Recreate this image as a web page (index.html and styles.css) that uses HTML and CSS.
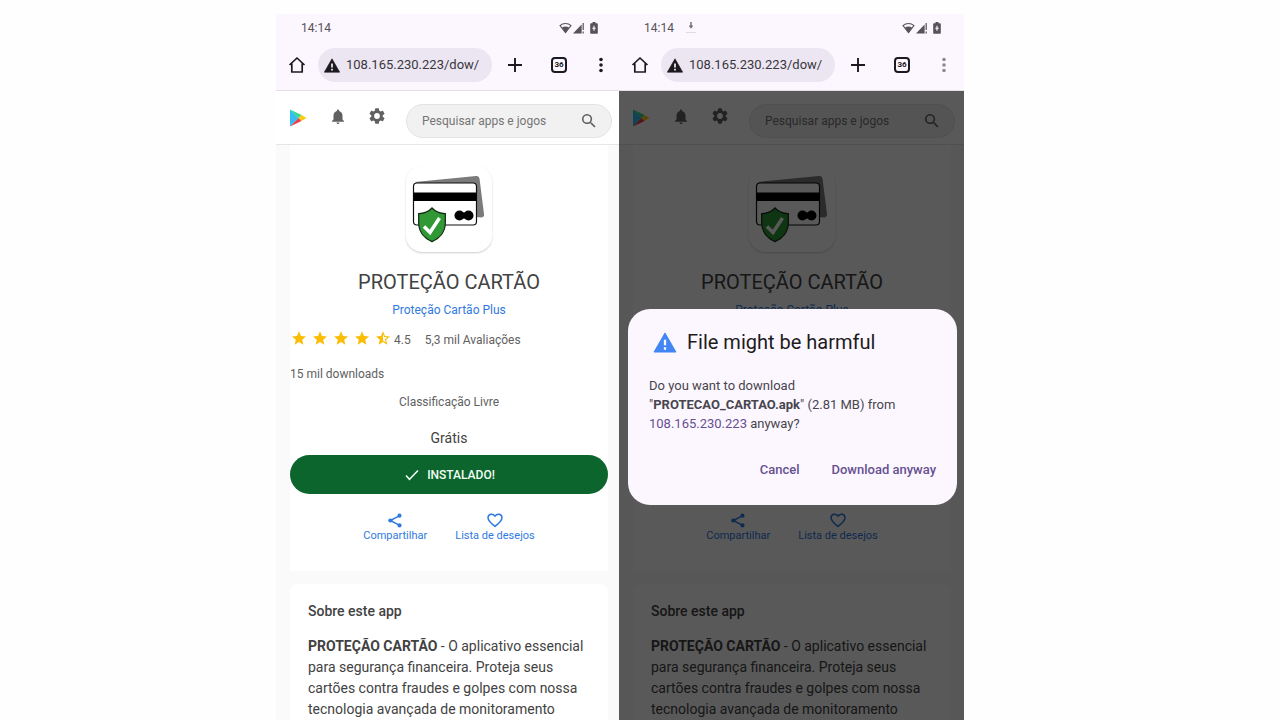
FILE: index.html
```html
<!DOCTYPE html>
<html lang="pt-BR">
<head>
<meta charset="utf-8">
<meta name="viewport" content="width=device-width, initial-scale=1">
<title>Proteção Cartão</title>
<link rel="stylesheet" href="styles.css">
</head>
<body>
<svg class="sprite" aria-hidden="true">
  <symbol id="wifi" viewBox="0 0 13 12"><path d="M1 3.6C4 .8 9 .8 12 3.6L6.5 10.5z" fill="none" stroke="currentColor" stroke-width="1.1"/><path d="M3 5.600c2-1.600 5-1.600 7 0L6.500 11z" fill="currentColor"/></symbol>
  <symbol id="signal" viewBox="0 0 12 12"><path d="M0 11.500L8.600 2.600V11.500z" fill="currentColor"/><path d="M10.200 1v7M10.200 9.500v2" stroke="currentColor" stroke-width="1.200" fill="none"/></symbol>
  <symbol id="battery" viewBox="0 0 8 12"><path d="M2.500 0h3v1.200H7q.8 0 .8.800v9q0 .8-.8.800H1q-.8 0-.8-.800V2q0-.8.8-.8h1.500z" fill="currentColor"/><path d="M4 3.800v5M2.300 6.300h3.400" stroke="#fff" stroke-width="1.100"/></symbol>
  <symbol id="home" viewBox="0 0 18 18"><path d="M1.500 9L9 2l7.500 7M3.800 7.500V16h10.400V7.500" fill="none" stroke="currentColor" stroke-width="1.700" stroke-linejoin="round"/></symbol>
  <symbol id="warn" viewBox="0 0 24 22"><path d="M12 1L23.500 21H.5z" fill="currentColor" stroke="currentColor" stroke-linejoin="round"/><path d="M12 8v6M12 16v2.500" stroke="#fff" stroke-width="2.400"/></symbol>
  <symbol id="plus" viewBox="0 0 16 16"><path d="M8 1v14M1 8h14" stroke="currentColor" stroke-width="1.900"/></symbol>
  <symbol id="dots" viewBox="0 0 6 16"><g fill="currentColor"><circle cx="3" cy="2.500" r="1.800"/><circle cx="3" cy="8" r="1.800"/><circle cx="3" cy="13.500" r="1.800"/></g></symbol>
  <symbol id="save" viewBox="0 0 10 14"><path d="M5 1v5M3.500 4.500L5 6.500l1.500-2" fill="none" stroke="#777" stroke-width="1.500"/><path d="M0 11.500h10" stroke="#ddd"/></symbol>
  <symbol id="play" viewBox="0 0 18 18"><path d="M1 .5v17L9.500 9z" fill="#35bdf2"/><path d="M1 .5L9.500 9l3-3z" fill="#36d98a"/><path d="M1 17.500L9.500 9l3 3z" fill="#ec3b50"/><path d="M12.500 6L17.500 9l-5 3-3-3z" fill="#fdc912"/></symbol>
  <symbol id="bell" viewBox="4 2 16 20"><path d="M12 22c1.100 0 2-.9 2-2h-4c0 1.100.9 2 2 2zm6-6v-5c0-3.070-1.640-5.640-4.500-6.320V4a1.500 1.500 0 0 0-3 0v.68C7.630 5.360 6 7.920 6 11v5l-2 2v1h16v-1z" fill="currentColor"/></symbol>
  <symbol id="gear" viewBox="2 2 20 20"><path fill="currentColor" d="M19.140 12.940a7 7 0 0 0 0-1.880l2.030-1.580a.5.5 0 0 0 .12-.61l-1.920-3.320a.5.5 0 0 0-.59-.22l-2.390.96a7 7 0 0 0-1.620-.94l-.36-2.540a.5.5 0 0 0-.48-.41h-3.840a.5.5 0 0 0-.47.410l-.36 2.540a7 7 0 0 0-1.620.94l-2.390-.96a.5.5 0 0 0-.59.220L2.740 8.870a.5.5 0 0 0 .12.610l2.030 1.580a7 7 0 0 0 0 1.880l-2.030 1.580a.5.5 0 0 0-.12.610l1.920 3.320c.12.220.37.290.59.220l2.390-.96c.5.380 1.030.7 1.620.94l.36 2.540c.05.240.24.410.48.410h3.840c.24 0 .44-.17.470-.41l.36-2.540a7 7 0 0 0 1.620-.94l2.390.96c.22.080.47 0 .59-.22l1.920-3.320a.5.5 0 0 0-.12-.61zM12 15.600a3.600 3.600 0 1 1 0-7.200 3.600 3.600 0 0 1 0 7.200z"/></symbol>
  <symbol id="search" viewBox="3 3 18 18"><path fill="currentColor" d="M15.500 14h-.79l-.28-.27A6.500 6.500 0 1 0 13.730 14.430l.27.280v.79l5 4.990L20.490 19zm-6 0a4.500 4.500 0 1 1 0-9 4.500 4.500 0 0 1 0 9z"/></symbol>
  <symbol id="cards" viewBox="0 0 86 86">
    <path d="M9 16L70 10q3-.5 3.500 2.500L78 48q.5 3-2.500 3.500L69 51z" fill="#7b7b7b"/>
    <rect x="7.500" y="17" width="63" height="42" rx="3.500" fill="#fff" stroke="#111" stroke-width="1.200"/>
    <path d="M7.500 26.500h63v8.500h-63z" fill="#000"/><circle cx="53.500" cy="49.500" r="5" fill="#000"/><circle cx="62.500" cy="49.500" r="5" fill="#000"/><path d="M53.500 46.500h9v6h-9z" fill="#000"/>
    <path d="M26 42c4 4.300 8 5.600 13.300 5.600v9.400c0 9-6 15.500-13.300 18.700-7.300-3.200-13.300-9.700-13.300-18.700v-9.400c5.300 0 9.300-1.300 13.300-5.600z" fill="#309834" stroke="#142e15" stroke-width="1.300"/>
    <path d="M18 60.500l6 6L33.500 52" fill="none" stroke="#fff" stroke-width="3.500"/>
  </symbol>
  <symbol id="star" viewBox="2 2 20 19"><path fill="currentColor" d="M12 17.270L18.180 21l-1.640-7.030L22 9.240l-7.190-.61L12 2 9.190 8.630 2 9.240l5.460 4.730L5.820 21z"/></symbol>
  <symbol id="half" viewBox="2 2 20 19"><path fill="currentColor" d="M22 9.240l-7.190-.62L12 2 9.190 8.630 2 9.240l5.460 4.730L5.820 21 12 17.270 18.180 21l-1.630-7.030zM12 15.400V6.100l1.710 4.040 4.380.38-3.320 2.880 1 4.280z"/></symbol>
  <symbol id="check" viewBox="0 0 14 12"><path d="M1 6.500l3.500 3.800L13 1.500" fill="none" stroke="currentColor" stroke-width="1.500"/></symbol>
  <symbol id="share" viewBox="0 0 16 16"><path d="M12.500 3L3 8l9.500 5" fill="none" stroke="currentColor" stroke-width="1.600"/><g fill="currentColor"><circle cx="12.800" cy="2.800" r="2.200"/><circle cx="3" cy="8" r="2.200"/><circle cx="12.800" cy="13.200" r="2.200"/></g></symbol>
  <symbol id="heart" viewBox="0 0 16 15"><path d="M8 13.500C4.500 10.500 1 8 1 4.800 1 .7 6 0 8 3.200 10 0 15 .7 15 4.800 15 8 11.500 10.500 8 13.500z" fill="none" stroke="currentColor" stroke-width="1.500"/></symbol>
</svg>
<main class="stage">
  <section class="phone">
    <header class="chrome">
      <div class="status"><time>14:14</time><span class="status-icons"><svg class="wifi"><use href="#wifi"/></svg><svg class="signal"><use href="#signal"/></svg><svg class="battery"><use href="#battery"/></svg></span></div>
      <div class="toolbar">
        <button class="icon-btn" aria-label="Home"><svg class="i18"><use href="#home"/></svg></button>
        <label class="address"><svg class="warn"><use href="#warn"/></svg><input type="text" aria-label="Address" value="108.165.230.223/dow/"></label>
        <button class="icon-btn plus" aria-label="New tab"><svg class="i16"><use href="#plus"/></svg></button>
        <button class="tabs" aria-label="36 tabs">36</button>
        <button class="icon-btn menu" aria-label="Menu"><svg class="dots"><use href="#dots"/></svg></button>
      </div>
    </header>
    <div class="page">
      <nav class="store-bar">
        <a class="play" href="#" aria-label="Play"><svg class="i18"><use href="#play"/></svg></a>
        <button class="icon-btn bell" aria-label="Notificações"><svg class="bell-icon"><use href="#bell"/></svg></button>
        <button class="icon-btn gear" aria-label="Configurações"><svg class="i16"><use href="#gear"/></svg></button>
        <label class="search"><input type="text" aria-label="Pesquisar" placeholder="Pesquisar apps e jogos"><svg class="search-icon"><use href="#search"/></svg></label>
      </nav>
      <article class="hero">
        <svg class="app-icon"><use href="#cards"/></svg>
        <h1>PROTEÇÃO CARTÃO</h1>
        <a class="maker" href="#">Proteção Cartão Plus</a>
        <div class="rating"><span class="stars"><svg><use href="#star"/></svg><svg><use href="#star"/></svg><svg><use href="#star"/></svg><svg><use href="#star"/></svg><svg><use href="#half"/></svg></span><span>4.5</span><span class="reviews">5,3 mil Avaliações</span></div>
        <p class="downloads">15 mil downloads</p>
        <p class="class">Classificação Livre</p>
        <p class="price">Grátis</p>
        <button class="install"><svg><use href="#check"/></svg>INSTALADO!</button>
        <div class="links"><a href="#"><svg><use href="#share"/></svg>Compartilhar</a><a href="#"><svg><use href="#heart"/></svg>Lista de desejos</a></div>
      </article>
      <article class="about">
        <h2>Sobre este app</h2>
        <p><strong>PROTEÇÃO CARTÃO</strong> - O aplicativo essencial para segurança financeira. Proteja seus cartões contra fraudes e golpes com nossa tecnologia avançada de monitoramento</p>
      </article>
    </div>
  </section>
  <section class="phone second">
    <header class="chrome">
      <div class="status"><time>14:14</time><svg class="save"><use href="#save"/></svg><span class="status-icons"><svg class="wifi"><use href="#wifi"/></svg><svg class="signal"><use href="#signal"/></svg><svg class="battery"><use href="#battery"/></svg></span></div>
      <div class="toolbar">
        <button class="icon-btn" aria-label="Home"><svg class="i18"><use href="#home"/></svg></button>
        <label class="address"><svg class="warn"><use href="#warn"/></svg><input type="text" aria-label="Address" value="108.165.230.223/dow/"></label>
        <button class="icon-btn plus" aria-label="New tab"><svg class="i16"><use href="#plus"/></svg></button>
        <button class="tabs" aria-label="36 tabs">36</button>
        <button class="icon-btn menu" aria-label="Menu"><svg class="dots"><use href="#dots"/></svg></button>
      </div>
    </header>
    <div class="page">
      <nav class="store-bar">
        <a class="play" href="#" aria-label="Play"><svg class="i18"><use href="#play"/></svg></a>
        <button class="icon-btn bell" aria-label="Notificações"><svg class="bell-icon"><use href="#bell"/></svg></button>
        <button class="icon-btn gear" aria-label="Configurações"><svg class="i16"><use href="#gear"/></svg></button>
        <label class="search"><input type="text" aria-label="Pesquisar" placeholder="Pesquisar apps e jogos"><svg class="search-icon"><use href="#search"/></svg></label>
      </nav>
      <article class="hero">
        <svg class="app-icon"><use href="#cards"/></svg>
        <h1>PROTEÇÃO CARTÃO</h1>
        <a class="maker" href="#">Proteção Cartão Plus</a>
        <div class="covered"></div>
        <div class="links"><a href="#"><svg><use href="#share"/></svg>Compartilhar</a><a href="#"><svg><use href="#heart"/></svg>Lista de desejos</a></div>
      </article>
      <article class="about">
        <h2>Sobre este app</h2>
        <p><strong>PROTEÇÃO CARTÃO</strong> - O aplicativo essencial para segurança financeira. Proteja seus cartões contra fraudes e golpes com nossa tecnologia avançada de monitoramento</p>
      </article>
      <div class="scrim">
        <div class="dialog" role="dialog" aria-labelledby="harm">
          <div class="dialog-head"><svg><use href="#warn"/></svg><h2 id="harm">File might be harmful</h2></div>
          <p>Do you want to download<br>"<strong>PROTECAO_CARTAO.apk</strong>" (2.81 MB) from<br><a href="#">108.165.230.223</a> anyway?</p>
          <div class="actions"><button>Cancel</button><button>Download anyway</button></div>
        </div>
      </div>
    </div>
  </section>
</main>
</body>
</html>
```
FILE: styles.css
```css
* { box-sizing: border-box; }
body { margin: 0; background: #fefefe; font: 12px/20px Roboto, "Noto Sans", sans-serif; color: #424242; }
h1, h2, p { margin: 0; font-weight: 400; }
a { color: #3079e0; text-decoration: none; }
svg { display: block; flex: none; }
button { border: 0; padding: 0; background: none; color: inherit; font: inherit; }
input { border: 0; padding: 0; background: none; outline: 0; font: inherit; color: inherit; min-width: 0; flex: 1; }
.sprite { position: absolute; width: 0; height: 0; }
.stage { display: grid; grid-template-columns: 276fr minmax(343px, 343fr) minmax(345px, 345fr) 316fr; padding-top: 14px; height: 100vh; overflow: hidden; }
.phone { grid-column: 2; display: flex; flex-direction: column; min-height: 0; }
.second { grid-column: 3; }
.chrome { background: #fcf7fe; height: 76px; flex: none; }
.status { display: flex; align-items: center; height: 28px; padding: 0 21px 0 25px; color: #56525a; font-size: 12px; }
.status-icons { margin-left: auto; display: flex; align-items: center; }
.wifi { width: 13px; height: 12px; }
.signal { width: 12px; height: 12px; margin-left: 1px; }
.battery { width: 8px; height: 12px; margin-left: 5px; }
.save { width: 10px; height: 14px; margin-left: 12px; }
.toolbar { display: flex; align-items: center; padding: 6px 15px 0 12px; color: #1c1a20; }
.i18 { width: 18px; height: 18px; }
.i16 { width: 16px; height: 16px; }
.address { flex: 1; min-width: 0; display: flex; align-items: center; gap: 6px; height: 34px; margin-left: 12px; padding: 0 6px; border-radius: 17px; background: #ece6f2; color: #39363d; font-size: 13px; }
.warn { width: 16px; height: 15px; color: #1c1a20; }
.plus { margin-left: 15px; }
.tabs { width: 16px; height: 16px; margin-left: 28px; border: 2px solid #1c1a20; border-radius: 4px; font-size: 8px; line-height: 12px; font-weight: 700; }
.menu { margin-left: 31px; }
.dots { width: 6px; height: 16px; }
.second .menu { color: #8e8a92; }
.second .status { padding-right: 23px; }
.second .toolbar { padding-right: 17px; }
.page { position: relative; flex: 1; min-height: 0; overflow: hidden; background: #fafafa; border-top: 1px solid #e2dfe5; }
.store-bar { display: flex; align-items: center; height: 54px; padding: 1px 7px 0 13px; background: #fff; border-bottom: 1px solid #e6e6e6; color: #616161; }
.second .store-bar { padding-right: 9px; }
.bell { margin: 0 0 4px 25px; }
.bell-icon { width: 12px; height: 15px; }
.gear { margin: 0 0 4px 25px; }
.search { flex: 1; min-width: 0; display: flex; align-items: center; height: 34px; margin: 6px 0 0 21px; padding: 0 15px; border: 1px solid #e4e4e4; border-radius: 17px; background: #f1f1f1; }
.search input::placeholder { color: #757575; opacity: 1; }
.search-icon { width: 14px; height: 14px; }
.hero { display: flex; flex-direction: column; align-items: center; height: 426px; margin: 0 11px 0 14px; padding-top: 21px; background: #fff; }
.second .hero, .second .about { margin-right: 13px; }
.app-icon { width: 86px; height: 86px; border-radius: 16px; background: #fff; box-shadow: 0 1px 2px #0003; }
h1 { margin-top: 16px; font-size: 20px; line-height: 28px; }
.maker { margin-top: 4px; }
.rating { align-self: stretch; display: flex; align-items: center; margin-top: 10px; padding-left: 2px; color: #616161; }
.stars { display: flex; gap: 7px; margin: 0 4px 4px 0; color: #fbbc04; }
.stars svg { width: 14px; height: 14px; }
.reviews { margin-left: 14px; }
.downloads { align-self: flex-start; margin-top: 14px; color: #616161; }
.class { margin-top: 8px; color: #616161; }
.price { margin-top: 16px; font-size: 14px; }
.install { align-self: stretch; display: flex; align-items: center; justify-content: center; gap: 8px; height: 39px; margin-top: 7px; padding-left: 2px; border-radius: 20px; background: #0c652d; color: #f2fff5; font-weight: 500; }
.install svg { width: 14px; height: 12px; }
.covered { height: 174px; }
.links { display: flex; gap: 28px; margin-top: 19px; font-size: 11px; line-height: 14px; }
.links a { display: flex; flex-direction: column; align-items: center; gap: 1px; }
.links svg { width: 16px; height: 15px; }
.about { margin: 13px 11px 0 14px; padding: 17px 18px; border-radius: 8px 8px 0 0; background: #fff; font-size: 14px; line-height: 21px; }
.about h2 { margin-bottom: 14px; font-size: 14px; font-weight: 500; }
.scrim { position: absolute; inset: -1px 0 0; padding: 219px 7px 0 9px; background: rgba(0, 0, 0, 0.65); }
.dialog { padding: 20px 21px 25px; border-radius: 22px; background: #fcf7fe; color: #48454e; font-size: 13px; }
.dialog-head { display: flex; align-items: center; gap: 10px; padding-left: 4px; color: #4285f4; }
.dialog-head svg { width: 24px; height: 21px; }
.dialog-head h2 { font-size: 20px; line-height: 26px; color: #1d1b20; }
.dialog p { margin-top: 21px; line-height: 19px; }
.dialog a, .actions { color: #665091; }
.actions { display: flex; justify-content: flex-end; gap: 32px; margin-top: 27px; font-weight: 500; }
```
